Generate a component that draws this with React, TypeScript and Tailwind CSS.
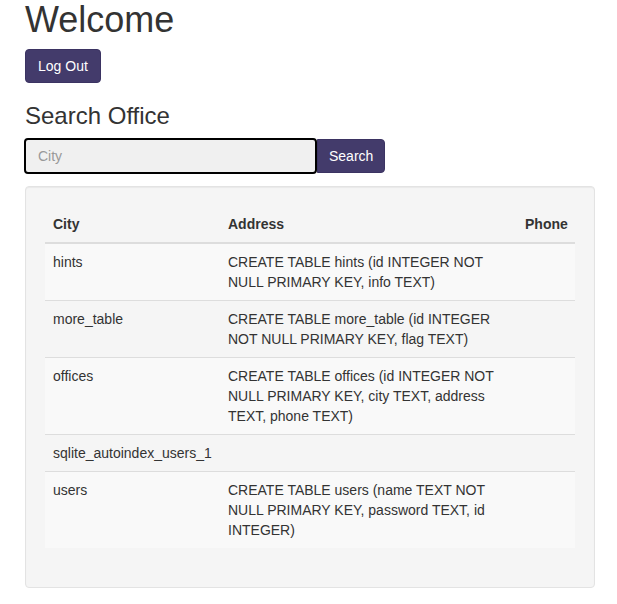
const rows = [
  { city: "hints", address: "CREATE TABLE hints (id INTEGER NOT NULL PRIMARY KEY, info TEXT)", phone: "" },
  { city: "more_table", address: "CREATE TABLE more_table (id INTEGER NOT NULL PRIMARY KEY, flag TEXT)", phone: "" },
  {
    city: "offices",
    address: "CREATE TABLE offices (id INTEGER NOT NULL PRIMARY KEY, city TEXT, address TEXT, phone TEXT)",
    phone: "",
  },
  { city: "sqlite_autoindex_users_1", address: "", phone: "" },
  {
    city: "users",
    address: "CREATE TABLE users (name TEXT NOT NULL PRIMARY KEY, password TEXT, id INTEGER)",
    phone: "",
  },
];

const App = () => {
  return (
    <div className="min-h-screen bg-white px-[25px] text-[14px] leading-[20px] text-[#333] [font-family:'Liberation_Sans',Arial,sans-serif]">
      <h1 className="mb-[9px] text-[36px] leading-[40px] font-normal">Welcome</h1>
      <button className="rounded-[4px] border border-[#3b3362] bg-[#433b6b] px-3 py-[6px] text-white">
        Log Out
      </button>

      <h3 className="mt-5 mb-[9px] text-[24px] leading-[26px] font-normal">Search Office</h3>
      <div className="flex items-center">
        <input
          placeholder="City"
          className="-ml-px h-[36px] w-[293px] rounded-[4px] border-2 border-black bg-[#f0f0f0] px-3 text-[14px] text-[#555] outline-none placeholder:text-[#999]"
        />
        <button className="h-[34px] rounded-r-[4px] border border-[#3b3362] bg-[#433b6b] px-[11px] text-white">
          Search
        </button>
      </div>

      <div className="mt-[12px] w-[570px] rounded-[4px] border border-[#e3e3e3] bg-[#f5f5f5] p-[19px] shadow-[inset_0_1px_1px_rgba(0,0,0,0.05)]">
        <table className="mb-5 w-[530px] table-fixed border-collapse">
          <colgroup>
            <col className="w-[175px]" />
            <col className="w-[297px]" />
            <col className="w-[58px]" />
          </colgroup>
          <thead>
            <tr>
              <th className="border-b-2 border-[#ddd] p-2 text-left font-bold">City</th>
              <th className="border-b-2 border-[#ddd] p-2 text-left font-bold">Address</th>
              <th className="border-b-2 border-[#ddd] p-2 text-left font-bold">Phone</th>
            </tr>
          </thead>
          <tbody>
            {rows.map((r, i) => (
              <tr key={r.city} className={i % 2 === 0 ? "bg-[#f9f9f9]" : ""}>
                <td className={`p-2 align-top ${i > 0 ? "border-t border-[#ddd]" : ""}`}>{r.city}</td>
                <td className={`p-2 align-top ${i > 0 ? "border-t border-[#ddd]" : ""}`}>{r.address}</td>
                <td className={`p-2 align-top ${i > 0 ? "border-t border-[#ddd]" : ""}`}>{r.phone}</td>
              </tr>
            ))}
          </tbody>
        </table>
      </div>
    </div>
  );
};

export default App;
